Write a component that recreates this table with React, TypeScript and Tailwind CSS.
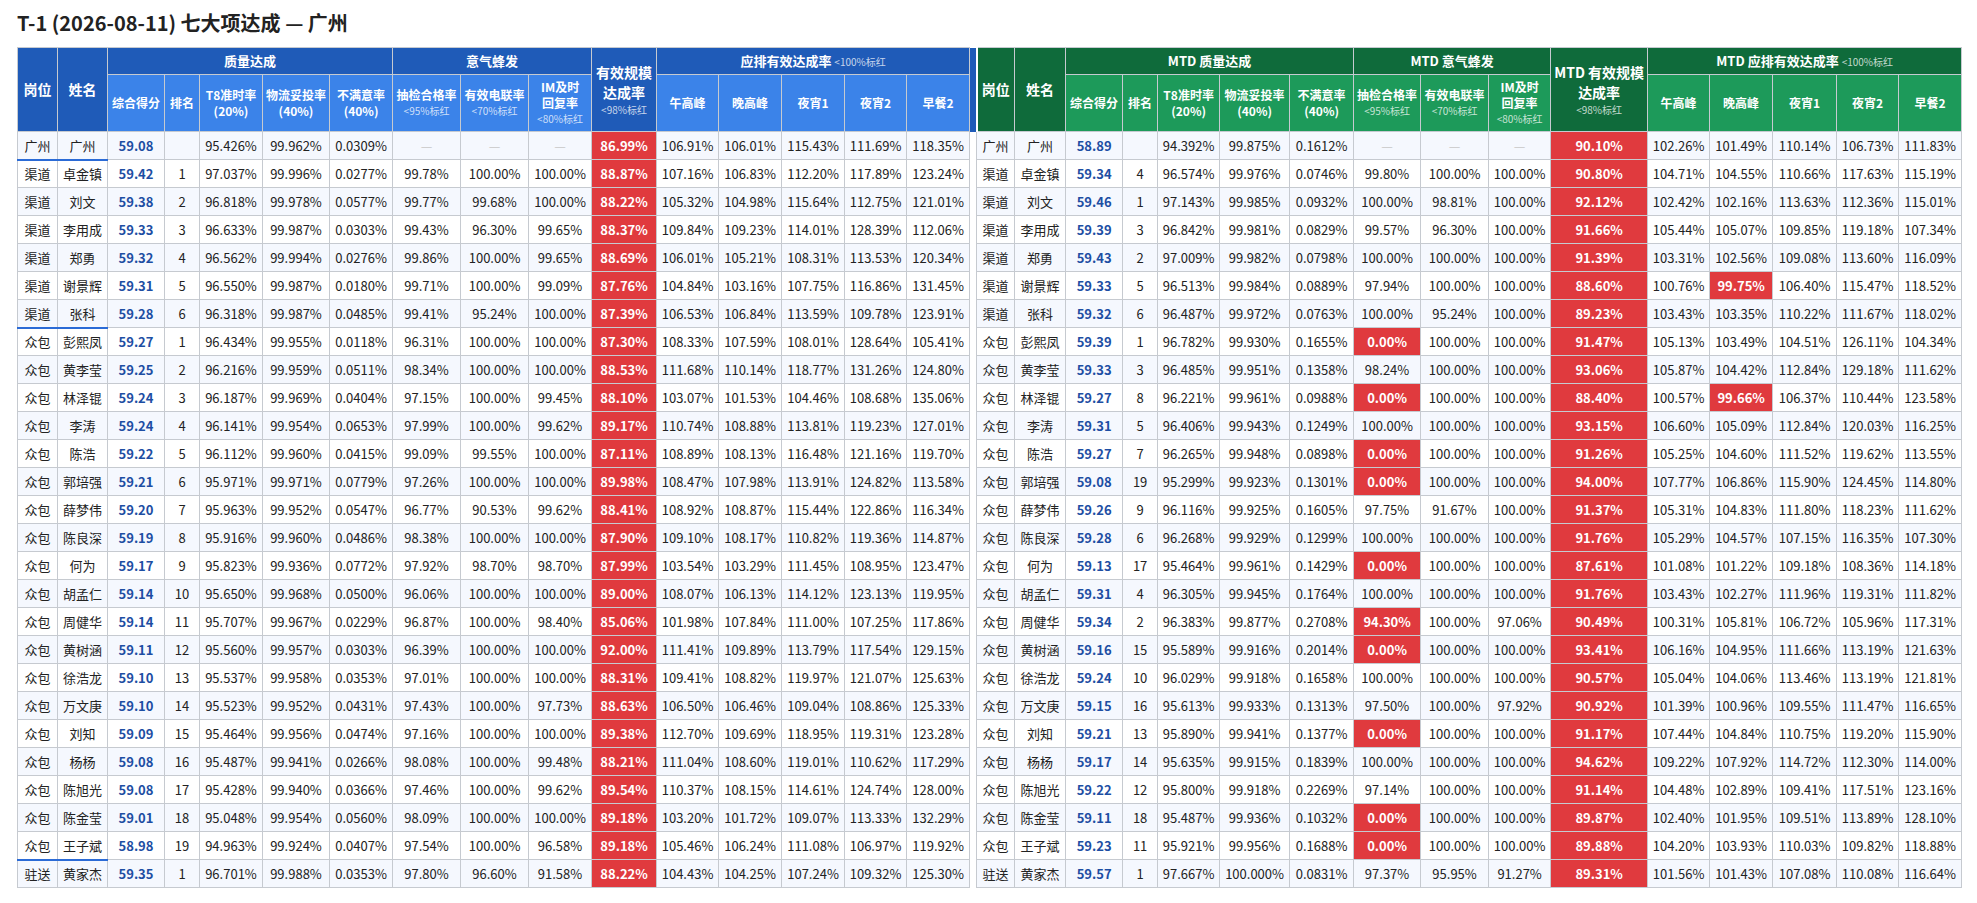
import React from 'react';

// 岗位 姓名 综合得分 排名 T8 物流 不满意 抽检 电联 IM 有效规模 午高峰 晚高峰 夜宵1 夜宵2 早餐2
const DAY = `广州 广州 59.08 - 95.426% 99.962% 0.0309% — — — 86.99% 106.91% 106.01% 115.43% 111.69% 118.35%
渠道 卓金镇 59.42 1 97.037% 99.996% 0.0277% 99.78% 100.00% 100.00% 88.87% 107.16% 106.83% 112.20% 117.89% 123.24%
渠道 刘文 59.38 2 96.818% 99.978% 0.0577% 99.77% 99.68% 100.00% 88.22% 105.32% 104.98% 115.64% 112.75% 121.01%
渠道 李用成 59.33 3 96.633% 99.987% 0.0303% 99.43% 96.30% 99.65% 88.37% 109.84% 109.23% 114.01% 128.39% 112.06%
渠道 郑勇 59.32 4 96.562% 99.994% 0.0276% 99.86% 100.00% 99.65% 88.69% 106.01% 105.21% 108.31% 113.53% 120.34%
渠道 谢景辉 59.31 5 96.550% 99.987% 0.0180% 99.71% 100.00% 99.09% 87.76% 104.84% 103.16% 107.75% 116.86% 131.45%
渠道 张科 59.28 6 96.318% 99.987% 0.0485% 99.41% 95.24% 100.00% 87.39% 106.53% 106.84% 113.59% 109.78% 123.91%
众包 彭熙凤 59.27 1 96.434% 99.955% 0.0118% 96.31% 100.00% 100.00% 87.30% 108.33% 107.59% 108.01% 128.64% 105.41%
众包 黄李莹 59.25 2 96.216% 99.959% 0.0511% 98.34% 100.00% 100.00% 88.53% 111.68% 110.14% 118.77% 131.26% 124.80%
众包 林泽锟 59.24 3 96.187% 99.969% 0.0404% 97.15% 100.00% 99.45% 88.10% 103.07% 101.53% 104.46% 108.68% 135.06%
众包 李涛 59.24 4 96.141% 99.954% 0.0653% 97.99% 100.00% 99.62% 89.17% 110.74% 108.88% 113.81% 119.23% 127.01%
众包 陈浩 59.22 5 96.112% 99.960% 0.0415% 99.09% 99.55% 100.00% 87.11% 108.89% 108.13% 116.48% 121.16% 119.70%
众包 郭培强 59.21 6 95.971% 99.971% 0.0779% 97.26% 100.00% 100.00% 89.98% 108.47% 107.98% 113.91% 124.82% 113.58%
众包 薛梦伟 59.20 7 95.963% 99.952% 0.0547% 96.77% 90.53% 99.62% 88.41% 108.92% 108.87% 115.44% 122.86% 116.34%
众包 陈良深 59.19 8 95.916% 99.960% 0.0486% 98.38% 100.00% 100.00% 87.90% 109.10% 108.17% 110.82% 119.36% 114.87%
众包 何为 59.17 9 95.823% 99.936% 0.0772% 97.92% 98.70% 98.70% 87.99% 103.54% 103.29% 111.45% 108.95% 123.47%
众包 胡孟仁 59.14 10 95.650% 99.968% 0.0500% 96.06% 100.00% 100.00% 89.00% 108.07% 106.13% 114.12% 123.13% 119.95%
众包 周健华 59.14 11 95.707% 99.967% 0.0229% 96.87% 100.00% 98.40% 85.06% 101.98% 107.84% 111.00% 107.25% 117.86%
众包 黄树涵 59.11 12 95.560% 99.957% 0.0303% 96.39% 100.00% 100.00% 92.00% 111.41% 109.89% 113.79% 117.54% 129.15%
众包 徐浩龙 59.10 13 95.537% 99.958% 0.0353% 97.01% 100.00% 100.00% 88.31% 109.41% 108.82% 119.97% 121.07% 125.63%
众包 万文庚 59.10 14 95.523% 99.952% 0.0431% 97.43% 100.00% 97.73% 88.63% 106.50% 106.46% 109.04% 108.86% 125.33%
众包 刘知 59.09 15 95.464% 99.956% 0.0474% 97.16% 100.00% 100.00% 89.38% 112.70% 109.69% 118.95% 119.31% 123.28%
众包 杨杨 59.08 16 95.487% 99.941% 0.0266% 98.08% 100.00% 99.48% 88.21% 111.04% 108.60% 119.01% 110.62% 117.29%
众包 陈旭光 59.08 17 95.428% 99.940% 0.0366% 97.46% 100.00% 99.62% 89.54% 110.37% 108.15% 114.61% 124.74% 128.00%
众包 陈金莹 59.01 18 95.048% 99.954% 0.0560% 98.09% 100.00% 100.00% 89.18% 103.20% 101.72% 109.07% 113.33% 132.29%
众包 王子斌 58.98 19 94.963% 99.924% 0.0407% 97.54% 100.00% 96.58% 89.18% 105.46% 106.24% 111.08% 106.97% 119.92%
驻送 黄家杰 59.35 1 96.701% 99.988% 0.0353% 97.80% 96.60% 91.58% 88.22% 104.43% 104.25% 107.24% 109.32% 125.30%`;

const MTD = `广州 广州 58.89 - 94.392% 99.875% 0.1612% — — — 90.10% 102.26% 101.49% 110.14% 106.73% 111.83%
渠道 卓金镇 59.34 4 96.574% 99.976% 0.0746% 99.80% 100.00% 100.00% 90.80% 104.71% 104.55% 110.66% 117.63% 115.19%
渠道 刘文 59.46 1 97.143% 99.985% 0.0932% 100.00% 98.81% 100.00% 92.12% 102.42% 102.16% 113.63% 112.36% 115.01%
渠道 李用成 59.39 3 96.842% 99.981% 0.0829% 99.57% 96.30% 100.00% 91.66% 105.44% 105.07% 109.85% 119.18% 107.34%
渠道 郑勇 59.43 2 97.009% 99.982% 0.0798% 100.00% 100.00% 100.00% 91.39% 103.31% 102.56% 109.08% 113.60% 116.09%
渠道 谢景辉 59.33 5 96.513% 99.984% 0.0889% 97.94% 100.00% 100.00% 88.60% 100.76% 99.75% 106.40% 115.47% 118.52%
渠道 张科 59.32 6 96.487% 99.972% 0.0763% 100.00% 95.24% 100.00% 89.23% 103.43% 103.35% 110.22% 111.67% 118.02%
众包 彭熙凤 59.39 1 96.782% 99.930% 0.1655% 0.00% 100.00% 100.00% 91.47% 105.13% 103.49% 104.51% 126.11% 104.34%
众包 黄李莹 59.33 3 96.485% 99.951% 0.1358% 98.24% 100.00% 100.00% 93.06% 105.87% 104.42% 112.84% 129.18% 111.62%
众包 林泽锟 59.27 8 96.221% 99.961% 0.0988% 0.00% 100.00% 100.00% 88.40% 100.57% 99.66% 106.37% 110.44% 123.58%
众包 李涛 59.31 5 96.406% 99.943% 0.1249% 100.00% 100.00% 100.00% 93.15% 106.60% 105.09% 112.84% 120.03% 116.25%
众包 陈浩 59.27 7 96.265% 99.948% 0.0898% 0.00% 100.00% 100.00% 91.26% 105.25% 104.60% 111.52% 119.62% 113.55%
众包 郭培强 59.08 19 95.299% 99.923% 0.1301% 0.00% 100.00% 100.00% 94.00% 107.77% 106.86% 115.90% 124.45% 114.80%
众包 薛梦伟 59.26 9 96.116% 99.925% 0.1605% 97.75% 91.67% 100.00% 91.37% 105.31% 104.83% 111.80% 118.23% 111.62%
众包 陈良深 59.28 6 96.268% 99.929% 0.1299% 100.00% 100.00% 100.00% 91.76% 105.29% 104.57% 107.15% 116.35% 107.30%
众包 何为 59.13 17 95.464% 99.961% 0.1429% 0.00% 100.00% 100.00% 87.61% 101.08% 101.22% 109.18% 108.36% 114.18%
众包 胡孟仁 59.31 4 96.305% 99.945% 0.1764% 100.00% 100.00% 100.00% 91.76% 103.43% 102.27% 111.96% 119.31% 111.82%
众包 周健华 59.34 2 96.383% 99.877% 0.2708% 94.30% 100.00% 97.06% 90.49% 100.31% 105.81% 106.72% 105.96% 117.31%
众包 黄树涵 59.16 15 95.589% 99.916% 0.2014% 0.00% 100.00% 100.00% 93.41% 106.16% 104.95% 111.66% 113.19% 121.63%
众包 徐浩龙 59.24 10 96.029% 99.918% 0.1658% 100.00% 100.00% 100.00% 90.57% 105.04% 104.06% 113.46% 113.19% 121.81%
众包 万文庚 59.15 16 95.613% 99.933% 0.1313% 97.50% 100.00% 97.92% 90.92% 101.39% 100.96% 109.55% 111.47% 116.65%
众包 刘知 59.21 13 95.890% 99.941% 0.1377% 0.00% 100.00% 100.00% 91.17% 107.44% 104.84% 110.75% 119.20% 115.90%
众包 杨杨 59.17 14 95.635% 99.915% 0.1839% 100.00% 100.00% 100.00% 94.62% 109.22% 107.92% 114.72% 112.30% 114.00%
众包 陈旭光 59.22 12 95.800% 99.918% 0.2269% 97.14% 100.00% 100.00% 91.14% 104.48% 102.89% 109.41% 117.51% 123.16%
众包 陈金莹 59.11 18 95.487% 99.936% 0.1032% 0.00% 100.00% 100.00% 89.87% 102.40% 101.95% 109.51% 113.89% 128.10%
众包 王子斌 59.23 11 95.921% 99.956% 0.1688% 0.00% 100.00% 100.00% 89.88% 104.20% 103.93% 110.03% 109.82% 118.88%
驻送 黄家杰 59.57 1 97.667% 100.000% 0.0831% 97.37% 95.95% 91.27% 89.31% 101.56% 101.43% 107.08% 110.08% 116.64%`;

const dayRows = DAY.split('\n').map((l) => l.split(' '));
const mtdRows = MTD.split('\n').map((l) => l.split(' '));

// red below these limits, by column index
const LIMITS: Record<number, number> = { 7: 95, 8: 70, 9: 80, 10: 98, 11: 100, 12: 100, 13: 100, 14: 100, 15: 100 };

function isRed(v: string, ci: number) {
  const lim = LIMITS[ci];
  if (lim === undefined || v === '—') return false;
  return parseFloat(v) < lim;
}

// rows that close a group on the day side get a blue line under 岗位 / 姓名
const GROUP_ENDS = [0, 6, 25];

const LEFT_W = [40, 50, 57, 35, 63, 67, 63, 68, 68, 63, 65, 62, 63, 63, 62, 63];
const RIGHT_W = [38, 51, 57, 35, 62, 70, 64, 67, 68, 62, 97, 62, 63, 64, 62, 63];

const TH = 'border border-[#c6cad0] text-white font-bold text-center align-middle p-0';
const SUB_BLUE = TH + ' bg-[#3b83e9] text-[12px]';
const SUB_GREEN = TH + ' bg-[#1d9a5a] text-[12px]';

function Sub({ children }: { children: React.ReactNode }) {
  return <div className="text-[10px] font-normal text-white/75 leading-[16px]">{children}</div>;
}

function Cells({ row, side, ri }: { row: string[]; side: 'day' | 'mtd'; ri: number }) {
  return (
    <>
      {row.map((v, ci) => {
        const red = isRed(v, ci);
        let cls = 'border border-[#c6cad0] text-center whitespace-nowrap p-0';
        if (red) cls += ' bg-[#e03a3e] text-white font-bold';
        else if (ci === 2) cls += ' text-[#1d4ea3] font-bold';
        else if (v === '—') cls += ' text-[#c8c8c8]';
        if (side === 'day' && ci < 2 && GROUP_ENDS.includes(ri)) cls += ' border-b-2 border-b-[#2b6bd6]';
        return (
          <td key={ci} className={cls}>
            {v === '-' ? '' : v}
          </td>
        );
      })}
    </>
  );
}

export default function App() {
  return (
    <div className="bg-white min-h-screen pl-[17px] pt-[9px] font-['Noto_Sans_CJK_SC','Noto_Sans',sans-serif] text-[#222]">
      <h1 className="text-[20px] font-bold leading-[28px] mb-[10px]">T-1 (2026-08-11) 七大项达成 — 广州</h1>

      <table className="border-collapse table-fixed w-[1944px] text-[13px]">
        <colgroup>
          {LEFT_W.map((w, i) => (
            <col key={'l' + i} style={{ width: w }} />
          ))}
          <col style={{ width: 7 }} />
          {RIGHT_W.map((w, i) => (
            <col key={'r' + i} style={{ width: w }} />
          ))}
        </colgroup>
        <thead>
          <tr className="h-[27px]">
            <th rowSpan={2} className={TH + ' bg-[#1f5bb8] text-[14px]'}>岗位</th>
            <th rowSpan={2} className={TH + ' bg-[#1f5bb8] text-[14px]'}>姓名</th>
            <th colSpan={5} className={TH + ' bg-[#1f5bb8]'}>质量达成</th>
            <th colSpan={3} className={TH + ' bg-[#1f5bb8]'}>意气蜂发</th>
            <th rowSpan={2} className={TH + ' bg-[#1f5bb8] text-[14px] leading-[20px]'}>
              <div>有效规模</div>
              <div>达成率</div>
              <Sub>&lt;98%标红</Sub>
            </th>
            <th colSpan={5} className={TH + ' bg-[#1f5bb8]'}>
              应排有效达成率 <span className="text-[10px] font-normal text-white/75">&lt;100%标红</span>
            </th>
            <th rowSpan={2} className="bg-[#1f5bb8] p-0 border-r-2 border-r-white"></th>

            <th rowSpan={2} className={TH + ' bg-[#0f6b3b] text-[14px]'}>岗位</th>
            <th rowSpan={2} className={TH + ' bg-[#0f6b3b] text-[14px]'}>姓名</th>
            <th colSpan={5} className={TH + ' bg-[#0f6b3b]'}>MTD 质量达成</th>
            <th colSpan={3} className={TH + ' bg-[#0f6b3b]'}>MTD 意气蜂发</th>
            <th rowSpan={2} className={TH + ' bg-[#0f6b3b] text-[14px] leading-[20px]'}>
              <div>MTD 有效规模</div>
              <div>达成率</div>
              <Sub>&lt;98%标红</Sub>
            </th>
            <th colSpan={5} className={TH + ' bg-[#0f6b3b]'}>
              MTD 应排有效达成率 <span className="text-[10px] font-normal text-white/75">&lt;100%标红</span>
            </th>
          </tr>
          <tr className="h-[57px] leading-[16px]">
            <th className={SUB_BLUE}>综合得分</th>
            <th className={SUB_BLUE}>排名</th>
            <th className={SUB_BLUE}>T8准时率<br />(20%)</th>
            <th className={SUB_BLUE}>物流妥投率<br />(40%)</th>
            <th className={SUB_BLUE}>不满意率<br />(40%)</th>
            <th className={SUB_BLUE}>抽检合格率<Sub>&lt;95%标红</Sub></th>
            <th className={SUB_BLUE}>有效电联率<Sub>&lt;70%标红</Sub></th>
            <th className={SUB_BLUE}>IM及时<br />回复率<Sub>&lt;80%标红</Sub></th>
            <th className={SUB_BLUE}>午高峰</th>
            <th className={SUB_BLUE}>晚高峰</th>
            <th className={SUB_BLUE}>夜宵1</th>
            <th className={SUB_BLUE}>夜宵2</th>
            <th className={SUB_BLUE}>早餐2</th>

            <th className={SUB_GREEN}>综合得分</th>
            <th className={SUB_GREEN}>排名</th>
            <th className={SUB_GREEN}>T8准时率<br />(20%)</th>
            <th className={SUB_GREEN}>物流妥投率<br />(40%)</th>
            <th className={SUB_GREEN}>不满意率<br />(40%)</th>
            <th className={SUB_GREEN}>抽检合格率<Sub>&lt;95%标红</Sub></th>
            <th className={SUB_GREEN}>有效电联率<Sub>&lt;70%标红</Sub></th>
            <th className={SUB_GREEN}>IM及时<br />回复率<Sub>&lt;80%标红</Sub></th>
            <th className={SUB_GREEN}>午高峰</th>
            <th className={SUB_GREEN}>晚高峰</th>
            <th className={SUB_GREEN}>夜宵1</th>
            <th className={SUB_GREEN}>夜宵2</th>
            <th className={SUB_GREEN}>早餐2</th>
          </tr>
        </thead>
        <tbody>
          {dayRows.map((row, ri) => (
            <tr key={ri} className={ri % 2 === 0 ? 'h-[28px] bg-[#f5f8fe]' : 'h-[28px] bg-white'}>
              <Cells row={row} side="day" ri={ri} />
              <td className="bg-white p-0 border-0"></td>
              <Cells row={mtdRows[ri]} side="mtd" ri={ri} />
            </tr>
          ))}
        </tbody>
      </table>
    </div>
  );
}
